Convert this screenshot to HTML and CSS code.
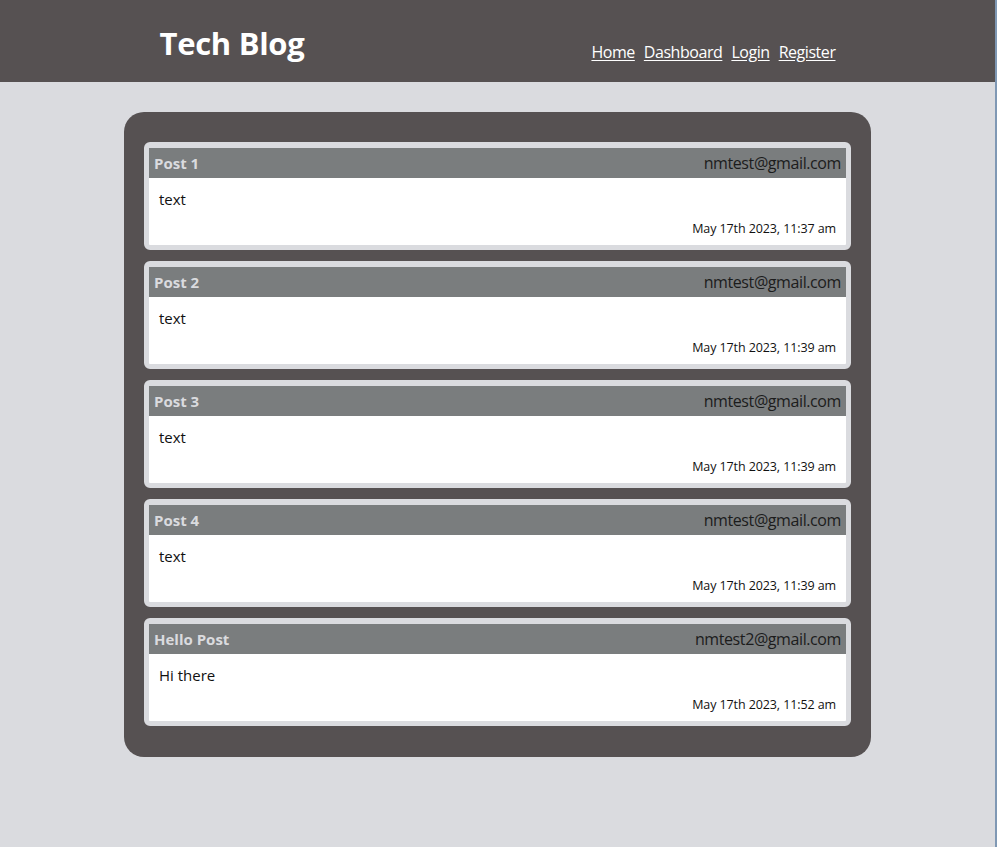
FILE: index.html
```html
<!DOCTYPE html>
<html lang="en">
<head>
<meta charset="utf-8">
<title>Tech Blog</title>
<link rel="stylesheet" href="styles.css">
</head>
<body>
<header class="site-header">
  <div class="header-inner">
    <h1 class="brand">Tech Blog</h1>
    <nav class="nav">
      <a href="#">Home</a>
      <a href="#">Dashboard</a>
      <a href="#">Login</a>
      <a href="#">Register</a>
    </nav>
  </div>
</header>
<main class="feed">
  <article class="post">
    <div class="post-head"><span class="post-title">Post 1</span><span class="post-author">nmtest@gmail.com</span></div>
    <div class="post-body"><p class="post-text">text</p><p class="post-date">May 17th 2023, 11:37 am</p></div>
  </article>
  <article class="post">
    <div class="post-head"><span class="post-title">Post 2</span><span class="post-author">nmtest@gmail.com</span></div>
    <div class="post-body"><p class="post-text">text</p><p class="post-date">May 17th 2023, 11:39 am</p></div>
  </article>
  <article class="post">
    <div class="post-head"><span class="post-title">Post 3</span><span class="post-author">nmtest@gmail.com</span></div>
    <div class="post-body"><p class="post-text">text</p><p class="post-date">May 17th 2023, 11:39 am</p></div>
  </article>
  <article class="post">
    <div class="post-head"><span class="post-title">Post 4</span><span class="post-author">nmtest@gmail.com</span></div>
    <div class="post-body"><p class="post-text">text</p><p class="post-date">May 17th 2023, 11:39 am</p></div>
  </article>
  <article class="post">
    <div class="post-head"><span class="post-title">Hello Post</span><span class="post-author">nmtest2@gmail.com</span></div>
    <div class="post-body"><p class="post-text">Hi there</p><p class="post-date">May 17th 2023, 11:52 am</p></div>
  </article>
</main>
</body>
</html>
```
FILE: styles.css
```css
* { box-sizing: border-box; }
html, body { margin: 0; padding: 0; }
body {
  background: #dadbdf;
  font-family: "Open Sans", "Noto Sans", sans-serif;
  min-height: 847px;
  border-right: 2px solid #7f98b4;
}
.site-header {
  background: #565152;
  height: 82px;
}
.header-inner {
  width: 676px;
  margin: 0 auto;
  height: 100%;
  display: flex;
  justify-content: space-between;
  align-items: flex-start;
}
.brand {
  margin: 0;
  padding-top: 24px;
  color: #ffffff;
  font-size: 31px;
  font-weight: 700;
  line-height: 38px;
  letter-spacing: -0.3px;
}
.nav {
  display: flex;
  gap: 9px;
  padding-top: 42px;
}
.nav a {
  color: #ffffff;
  font-size: 16px;
  line-height: 20px;
  text-decoration: underline;
  text-underline-offset: 2px;
  letter-spacing: -0.45px;
}
.feed {
  width: 747px;
  margin: 30px auto 0;
  background: #565152;
  border-radius: 20px;
  padding: 30px 20px 31px;
  display: flex;
  flex-direction: column;
  gap: 11px;
}
.post {
  border: 5px solid #dadbdf;
  border-top-width: 6px;
  border-radius: 6px;
  background: #ffffff;
  overflow: hidden;
}
.post-head {
  background: #7a7d7e;
  height: 30px;
  display: flex;
  align-items: center;
  justify-content: space-between;
  padding: 0 5px;
}
.post-title {
  color: #dadbdf;
  font-weight: 700;
  font-size: 15px;
  letter-spacing: 0;
}
.post-author {
  color: #1c1c1c;
  font-size: 16px;
  letter-spacing: -0.4px;
}
.post-body {
  height: 67px;
  padding: 10px 10px 0;
}
.post-text {
  margin: 0;
  font-size: 15px;
  line-height: 22px;
  color: #111;
}
.post-date {
  margin: 10px 0 0;
  text-align: right;
  font-size: 12.5px;
  line-height: 18px;
  color: #111;
  letter-spacing: -0.1px;
}
```
